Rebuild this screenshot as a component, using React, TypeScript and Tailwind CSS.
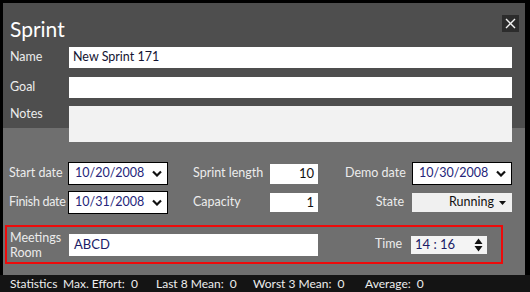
const font = { fontFamily: 'Lato, "Noto Sans", sans-serif' }

function Chevron() {
  return (
    <svg width="10" height="7" viewBox="0 0 10 7" className="shrink-0">
      <path d="M1 1.5 L5 5.5 L9 1.5" fill="none" stroke="#111" strokeWidth="2.2" />
    </svg>
  )
}

function DateBox({ value }: { value: string }) {
  return (
    <div className="flex h-[23px] w-[100px] items-center justify-between border border-black bg-white pl-[6px] pr-[5px]">
      <span className="text-[12.5px] text-[#25257a]">{value}</span>
      <Chevron />
    </div>
  )
}

function Label({ children, className = "" }: { children: React.ReactNode; className?: string }) {
  return <span className={"whitespace-nowrap text-[12.5px] text-[#ececec] " + className}>{children}</span>
}

export default function App() {
  return (
    <div className="flex h-[292px] w-[530px] flex-col bg-black pt-[3px]" style={font}>
      <div className="ml-[3px] mr-[5px] flex h-[272px] flex-col bg-[linear-gradient(#4e4e4e_0_125px,#6f6f6f_125px)] pl-[6px] pr-[13px]">
        {/* Title */}
        <div className="flex h-[44px] items-start justify-between">
          <span className="mt-[13px] pl-[1px] text-[21px] leading-[26px] text-white">Sprint</span>
          <button className="mr-[-7px] mt-[12px] grid h-[17px] w-[17px] place-items-center bg-[#2c2c2c]">
            <svg width="11" height="11" viewBox="0 0 11 11">
              <path d="M1 1 L10 10 M10 1 L1 10" stroke="#f2f2f2" strokeWidth="1.4" />
            </svg>
          </button>
        </div>

        {/* Name / Goal / Notes */}
        <div className="flex items-center">
          <Label className="w-[60px] pl-[1px]">Name</Label>
          <div className="flex h-[21px] flex-1 items-center bg-white pl-[4px] text-[12.5px] text-[#141432]">New Sprint 171</div>
        </div>
        <div className="mt-[9px] flex items-center">
          <Label className="w-[60px] pl-[1px]">Goal</Label>
          <div className="h-[21px] flex-1 bg-white" />
        </div>
        <div className="mt-[8px] flex items-start">
          <Label className="w-[60px] pl-[1px] leading-[16px]">Notes</Label>
          <div className="h-[36px] flex-1 bg-[#f2f2f2]" />
        </div>

        {/* Dates grid */}
        <div className="mt-[20px] grid grid-cols-[59px_100px_25px_77px_48px_27px_67px_100px] items-center gap-y-[6px]">
          <Label>Start date</Label>
          <DateBox value="10/20/2008" />
          <span />
          <Label>Sprint length</Label>
          <div className="flex h-[20px] items-center justify-end bg-white pr-[4px] text-[13px] text-[#111]">10</div>
          <span />
          <Label>Demo date</Label>
          <DateBox value="10/30/2008" />

          <Label className="tracking-[-0.3px]">Finish date</Label>
          <DateBox value="10/31/2008" />
          <span />
          <Label>Capacity</Label>
          <div className="flex h-[19px] items-center justify-end bg-white pr-[4px] text-[13px] text-[#111]">1</div>
          <span />
          <Label className="pr-[8px] text-right">State</Label>
          <div className="flex h-[19px] items-center justify-end gap-[5px] bg-[#f0f0f0] pr-[6px] text-[12.5px] text-[#111]">
            Running
            <svg width="7" height="4" viewBox="0 0 7 4">
              <path d="M0 0 L7 0 L3.5 4 Z" fill="#111" />
            </svg>
          </div>
        </div>

        {/* Meetings room (highlighted) */}
        <div className="ml-[-4px] mr-[9px] mt-[11px] flex h-[39px] items-center border-2 border-[#ee0a0a] pl-[3px]">
          <Label className="w-[59px] leading-[15px]">
            Meetings
            <br />
            Room
          </Label>
          <div className="flex h-[22px] w-[249px] items-center bg-white pl-[5px] text-[13px] text-[#1a1a66]">ABCD</div>
          <Label className="ml-[57px] w-[37px]">Time</Label>
          <div className="ml-[-1px] flex h-[18px] w-[76px] items-center justify-between bg-[#f4f4f4] pl-[4px] pr-[4px] text-[13px] text-[#1a1a66]">
            <span className="whitespace-pre">14 : 16</span>
            <svg width="9" height="14" viewBox="0 0 9 14">
              <path d="M0.5 6 L4.5 0.5 L8.5 6 Z M0.5 8 L4.5 13.5 L8.5 8 Z" fill="#111" />
            </svg>
          </div>
        </div>
      </div>

      {/* Status bar */}
      <div className="flex h-[17px] items-center bg-[#141414] pl-[10px] text-[12px] text-[#ededed]">
        <span className="w-[53px]">Statistics</span>
        <span className="w-[93px]">Max. Effort:&nbsp; 0</span>
        <span className="w-[97px]">Last 8 Mean:&nbsp; 0</span>
        <span className="w-[112px]">Worst 3 Mean:&nbsp; 0</span>
        <span>Average:&nbsp; 0</span>
      </div>
    </div>
  )
}
